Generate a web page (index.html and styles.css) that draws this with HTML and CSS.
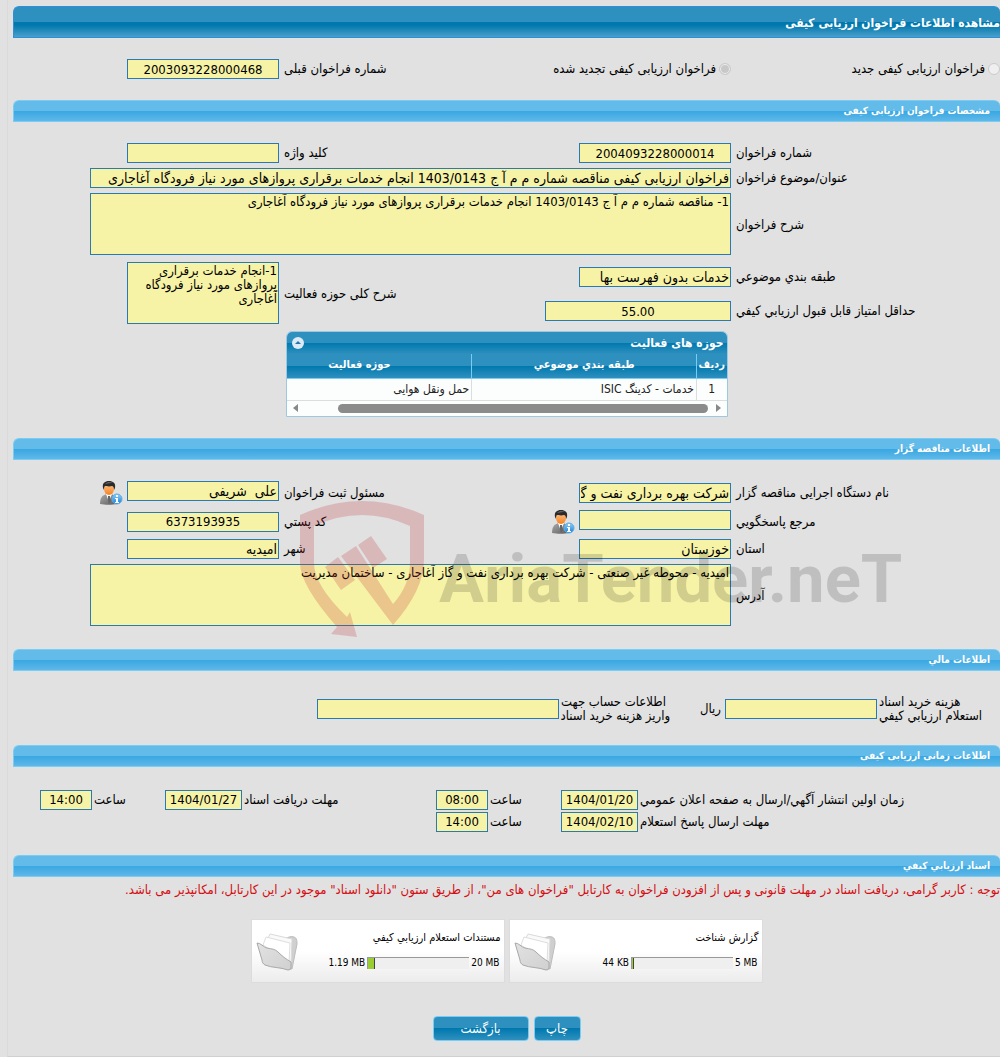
FILE: index.html
```html
<!DOCTYPE html>
<html lang="fa" dir="rtl">
<head>
    <meta charset="UTF-8">
    <meta name="viewport" content="width=device-width, initial-scale=1.0">
    <title>مشاهده اطلاعات فراخوان ارزیابی کیفی</title>
    <link rel="stylesheet" href="styles.css">
</head>
<body>
    <!-- Shared icons -->
    <svg class="sprite" aria-hidden="true">
        <defs>
            <linearGradient id="suit" x1="0" y1="0" x2="1" y2="1">
                <stop offset="0" stop-color="#a9a9a9"/>
                <stop offset="1" stop-color="#5c5c5c"/>
            </linearGradient>
            <linearGradient id="face" x1="0" y1="0" x2="0" y2="1">
                <stop offset="0" stop-color="#ffc58d"/>
                <stop offset="1" stop-color="#f58220"/>
            </linearGradient>
            <linearGradient id="badge" x1="0" y1="0" x2="0" y2="1">
                <stop offset="0" stop-color="#8fd0f8"/>
                <stop offset="1" stop-color="#1b7fd6"/>
            </linearGradient>
            <linearGradient id="front" x1="0" y1="0" x2="1" y2="1">
                <stop offset="0" stop-color="#e2e2e2"/>
                <stop offset="1" stop-color="#d0d0d0"/>
            </linearGradient>
        </defs>
        <symbol id="icon-user" viewBox="0 0 24 24">
            <path d="M1 23c0-6 2-9 7-10h4c4 1 6 4 6 10-5 1-12 1-17 0z" fill="url(#suit)"/>
            <path d="M7 13l3 8 3-8z" fill="#fff"/>
            <path d="M9 15h2l1 5-2 3-1-3z" fill="#666"/>
            <ellipse cx="10" cy="8" rx="5" ry="6" fill="url(#face)"/>
            <path d="M4 7c-1-5 2-7 6-7s7 2 6 7l-1 2c0-3-1-4-2-4-3 1-6 0-7 0-1 1-1 2-1 4z" fill="#2b2b2b"/>
            <path d="M6 3c2-2 5-2 8-1-3 0-5 0-8 1z" fill="#777"/>
            <circle cx="18" cy="18" r="5" fill="url(#badge)" stroke="#5aaee8"/>
            <path d="M17 14h2v2h-2zM16 17h3v4h1v1h-4v-1h1v-3h-1z" fill="#fff"/>
        </symbol>
        <symbol id="icon-folder" viewBox="0 0 44 42">
            <path d="M30 8C33 6 36 5 39 6 42 7 42 10 42 13L37 38 33 37Z" fill="#cfcfcf" stroke="#bdbdbd"/>
            <path d="M10 13L15 3 37 8 36 32Z" fill="#fafafa" stroke="#dadada"/>
            <path d="M8 14L11 6 35 12 34 32Z" fill="#fff" stroke="#dedede"/>
            <path d="M2 12C6 12 8 16 12 17 17 18 20 18 23 21 27 25 31 28 36 31L36 37Q36 39 33 39C25 36 17 37 10 34 8 33 7 31 7 29Z" fill="url(#front)" stroke="#a8a8a8"/>
        </symbol>
    </svg>

    <main class="page">
        <h1 class="title-bar">مشاهده اطلاعات فراخوان ارزیابی کیفی</h1>
        <div class="form-grid">
            <div class="choice">
                <input type="radio" name="type" id="type-new" disabled>
                <label for="type-new">فراخوان ارزیابی کیفی جدید</label>
            </div>
            <div class="choice">
                <input type="radio" name="type" id="type-renewed" checked disabled>
                <label for="type-renewed">فراخوان ارزیابی کیفی تجدید شده</label>
            </div>
            <label class="caption" for="prev-number">شماره فراخوان قبلی</label>
            <div class="cell"><input class="field number" type="text" id="prev-number" value="2003093228000468" readonly></div>
        </div>

        <section>
            <h2 class="section-bar">مشخصات فراخوان ارزیابی کیفی</h2>
            <div class="form-grid">
                <label class="caption" for="number">شماره فراخوان</label>
                <div class="cell"><input class="field number" type="text" id="number" value="2004093228000014" readonly></div>
                <label class="caption" for="keyword">کلید واژه</label>
                <div class="cell"><input class="field" type="text" id="keyword" readonly></div>

                <label class="caption" for="subject">عنوان/موضوع فراخوان</label>
                <div class="cell wide"><input class="field" type="text" id="subject" value="فراخوان ارزیابی کیفی مناقصه شماره م م آ ج 1403/0143 انجام خدمات برقراری پروازهای مورد نیاز فرودگاه آغاجاری" readonly></div>

                <label class="caption" for="description">شرح فراخوان</label>
                <div class="cell wide"><textarea class="field area" id="description" readonly>1- مناقصه شماره م م آ ج 1403/0143 انجام خدمات برقراری پروازهای مورد نیاز فرودگاه آغاجاری</textarea></div>

                <label class="caption" for="category">طبقه بندي موضوعي</label>
                <div class="cell"><input class="field" type="text" id="category" value="خدمات بدون فهرست بها" readonly></div>
                <label class="caption tall" for="activity">شرح کلی حوزه فعالیت</label>
                <div class="cell tall"><textarea class="field area" id="activity" readonly>1-انجام خدمات برقراری پروازهای مورد نیاز فرودگاه آغاجاری</textarea></div>

                <label class="caption" for="score">حداقل امتیاز قابل قبول ارزیابي کیفي</label>
                <div class="cell"><input class="field number score" type="text" id="score" value="55.00" readonly></div>
            </div>

            <div class="data-grid">
                <div class="data-title">
                    <h3>حوزه های فعالیت</h3>
                    <button type="button" class="collapse" aria-label="بستن">
                        <svg viewBox="0 0 12 12" aria-hidden="true"><circle cx="6" cy="6" r="6" fill="#dceaf6"/><path d="M3 7l3-3 3 3z" fill="#1d78ae"/></svg>
                    </button>
                </div>
                <div class="data-view">
                    <table>
                        <thead>
                            <tr><th class="col-row">ردیف</th><th>طبقه بندي موضوعي</th><th>حوزه فعالیت</th></tr>
                        </thead>
                        <tbody>
                            <tr><td class="col-row">1</td><td>خدمات - کدینگ ISIC</td><td>حمل ونقل هوایی</td></tr>
                        </tbody>
                    </table>
                </div>
                <div class="scrollbar" aria-hidden="true">
                    <span class="arrow arrow-right"></span>
                    <span class="track"><span class="thumb"></span></span>
                    <span class="arrow arrow-left"></span>
                </div>
            </div>
        </section>

        <section class="owner">
            <h2 class="section-bar">اطلاعات مناقصه گزار</h2>
            <div class="form-grid">
                <label class="caption" for="agency">نام دستگاه اجرایی مناقصه گزار</label>
                <div class="cell"><input class="field" type="text" id="agency" value="شرکت بهره برداری نفت و گاز" readonly></div>
                <label class="caption" for="registrar">مسئول ثبت فراخوان</label>
                <div class="cell with-icon">
                    <input class="field" type="text" id="registrar" value="علی  شریفی" readonly>
                    <button type="button" class="user-info" aria-label="مسئول ثبت فراخوان"><svg><use href="#icon-user"/></svg></button>
                </div>

                <label class="caption" for="contact">مرجع پاسخگویي</label>
                <div class="cell with-icon">
                    <input class="field" type="text" id="contact" readonly>
                    <button type="button" class="user-info" aria-label="مرجع پاسخگویي"><svg><use href="#icon-user"/></svg></button>
                </div>
                <label class="caption" for="postcode">کد پستي</label>
                <div class="cell"><input class="field number" type="text" id="postcode" value="6373193935" readonly></div>

                <label class="caption" for="province">استان</label>
                <div class="cell"><input class="field" type="text" id="province" value="خوزستان" readonly></div>
                <label class="caption" for="city">شهر</label>
                <div class="cell"><input class="field" type="text" id="city" value="امیدیه" readonly></div>

                <label class="caption" for="address">آدرس</label>
                <div class="cell wide"><textarea class="field area" id="address" readonly>امیدیه - محوطه غیر صنعتی - شرکت بهره برداری نفت و گاز آغاجاری - ساختمان مدیریت</textarea></div>
            </div>
            <div class="watermark" dir="ltr">
                <svg viewBox="0 0 124 138" aria-hidden="true">
                    <path d="M0 15Q62-13 124 15V60Q124 90 93 125L41 56 56 46 93 104Q110 85 110 62V26Q62 4 14 26V63Q14 85 47 117L50 112 57 137 31 134 37 127Q0 85 0 63Z"/>
                    <path d="M25 67L38 57 55 80 41 90ZM58 45L71 36 87 59 73 68Z"/>
                </svg>
                <span>AriaTender.neT</span>
            </div>
        </section>

        <section>
            <h2 class="section-bar">اطلاعات مالي</h2>
            <div class="finance">
                <label for="doc-cost">هزینه خرید اسناد<br>استعلام ارزیابي کیفي</label>
                <input class="field" type="text" id="doc-cost" readonly>
                <span class="unit">ریال</span>
                <label for="account">اطلاعات حساب جهت<br>واریز هزینه خرید اسناد</label>
                <input class="field account" type="text" id="account" readonly>
            </div>
        </section>

        <section>
            <h2 class="section-bar">اطلاعات زمانی ارزیابی کیفی</h2>
            <div class="schedule">
                <label for="publish-date">زمان اولین انتشار آگهي/ارسال به صفحه اعلان عمومي</label>
                <input class="field number" type="text" id="publish-date" value="1404/01/20" readonly>
                <label for="publish-time">ساعت</label>
                <input class="field number" type="text" id="publish-time" value="08:00" readonly>
                <label for="receive-date">مهلت دریافت اسناد</label>
                <input class="field number" type="text" id="receive-date" value="1404/01/27" readonly>
                <label for="receive-time">ساعت</label>
                <input class="field number" type="text" id="receive-time" value="14:00" readonly>

                <label class="row-start" for="reply-date">مهلت ارسال پاسخ استعلام</label>
                <input class="field number" type="text" id="reply-date" value="1404/02/10" readonly>
                <label for="reply-time">ساعت</label>
                <input class="field number" type="text" id="reply-time" value="14:00" readonly>
            </div>
        </section>

        <section>
            <h2 class="section-bar">اسناد ارزیابي کیفي</h2>
            <p class="notice">توجه : کاربر گرامی، دریافت اسناد در مهلت قانونی و پس از افزودن فراخوان به کارتابل "فراخوان های من"، از طریق ستون "دانلود اسناد" موجود در این کارتابل، امکانپذیر می باشد.</p>
            <div class="documents">
                <article class="document">
                    <div class="document-info">
                        <h3>گزارش شناخت</h3>
                        <div class="usage" dir="ltr">
                            <span>44 KB</span>
                            <span class="meter"><span class="meter-fill" style="width: 2%"></span></span>
                            <span>5 MB</span>
                        </div>
                    </div>
                    <svg class="folder" aria-hidden="true"><use href="#icon-folder"/></svg>
                </article>
                <article class="document">
                    <div class="document-info">
                        <h3>مستندات استعلام ارزیابي کیفي</h3>
                        <div class="usage" dir="ltr">
                            <span>1.19 MB</span>
                            <span class="meter"><span class="meter-fill" style="width: 7%"></span></span>
                            <span>20 MB</span>
                        </div>
                    </div>
                    <svg class="folder" aria-hidden="true"><use href="#icon-folder"/></svg>
                </article>
            </div>
        </section>

        <div class="actions">
            <button type="button" class="button">چاپ</button>
            <button type="button" class="button button-wide">بازگشت</button>
        </div>
    </main>
</body>
</html>
```

FILE: styles.css
```css
* {
    box-sizing: border-box;
}

body {
    margin: 0;
    background-color: #e1e1e1;
    color: #000;
    font-family: Tahoma, "DejaVu Sans Condensed", "DejaVu Sans", sans-serif;
    font-size: 13px;
    line-height: 14px;
}

h1, h2, h3, p {
    margin: 0;
}

button, input, textarea {
    font-family: inherit;
}

.sprite {
    position: absolute;
    width: 0;
    height: 0;
}

.page {
    margin-left: 7px;
    padding: 6px 0 15px 5px;
    border-left: 1px solid #dadada;
    border-bottom: 1px solid #d0d0d0;
}

/* Bars */
.title-bar {
    height: 32px;
    border: 1px solid #2f8fd8;
    border-right: 0;
    border-radius: 6px 6px 0 0;
    background: linear-gradient(#2e90bf 0, #2e90bf 50%, #0078ae 50%, #0078ae 60%, #4a9fca 100%);
    color: #fff;
    font-size: 12px;
    line-height: 32px;
}

.section-bar {
    height: 22px;
    padding-right: 10px;
    border: 1px solid #79cdf5;
    border-right: 0;
    border-radius: 6px 6px 0 0;
    background: linear-gradient(#62bbe9 0, #62bbe9 50%, #38a7e2 50%, #5fb8e8 100%);
    color: #fff;
    font-size: 10px;
    line-height: 20px;
}

/* Forms */
.form-grid {
    display: grid;
    grid-template-columns: 269fr 251fr 201fr 266fr;
    row-gap: 5px;
    align-items: center;
    padding: 21px 0;
}

.caption {
    padding-left: 5px;
    text-align: left;
}

.cell {
    display: flex;
    min-width: 0;
}

.wide {
    grid-column: span 3;
    padding-left: 77px;
}

.wide .field {
    width: 100%;
}

.tall {
    grid-row: span 2;
}

.field {
    width: 152px;
    height: 20px;
    margin: 0;
    padding: 1px;
    border: 1px solid #2a7aad;
    border-radius: 0;
    background-color: #f6f3a6;
    color: #000;
    font-size: 14px;
    outline: none;
}

.number {
    font-size: 13px;
    text-align: center;
}

.score {
    width: 186px;
}

.area {
    display: block;
    height: 62px;
    margin-bottom: 2px;
    font-size: 13px;
    line-height: 14px;
    resize: none;
    overflow: hidden;
}

.with-icon {
    align-items: flex-start;
}

.user-info {
    width: 24px;
    height: 24px;
    margin-right: 4px;
    padding: 0;
    border: 0;
    background: none;
    cursor: pointer;
}

.user-info svg {
    display: block;
    width: 24px;
    height: 24px;
}

.choice {
    display: flex;
    align-items: center;
    gap: 3px;
}

.choice input {
    appearance: none;
    width: 12px;
    height: 12px;
    margin: 0;
    border: 1px solid #cbcbcb;
    border-radius: 50%;
    background-color: #efefef;
}

.choice input:checked {
    background-color: #c8c8c8;
    box-shadow: inset 0 0 0 1px #efefef;
}

/* Activity table */
.data-grid {
    width: 442px;
    max-width: 100%;
    margin: -16px auto 21px;
    border: 1px solid #9dc8e0;
    border-radius: 6px 6px 0 0;
    background-color: #fcfdfd;
    overflow: hidden;
}

.data-title {
    display: flex;
    justify-content: space-between;
    align-items: center;
    height: 22px;
    padding: 0 3px 0 5px;
    background: linear-gradient(#2e90bf 50%, #0078ae 50%, #2e90bf 100%);
    color: #fff;
}

.data-title h3 {
    font-size: 12px;
}

.collapse {
    width: 12px;
    height: 12px;
    padding: 0;
    border: 0;
    background: none;
    cursor: pointer;
}

.collapse svg {
    display: block;
}

.data-view {
    overflow: hidden;
}

.data-view table {
    width: 480px;
    border-collapse: collapse;
    table-layout: fixed;
    font-size: 12px;
}

.data-view thead {
    background: linear-gradient(#2e90bf 50%, #0078ae 50%, #2e90bf 100%);
    color: #fff;
}

.data-view th {
    height: 24px;
    padding: 0 0 2px;
    border-left: 1px solid #79cdf5;
    border-bottom: 1px solid #79cdf5;
    font-size: 11px;
}

.data-view td {
    height: 22px;
    padding: 0 2px;
    border-left: 1px solid #ddd;
    border-bottom: 1px solid #ddd;
    color: #222;
}

.data-view .col-row {
    width: 30px;
    text-align: center;
}

.scrollbar {
    display: flex;
    align-items: center;
    height: 15px;
    padding: 0 6px;
}

.arrow {
    border: 4px solid transparent;
    border-width: 4px 0;
}

.arrow-right {
    border-left: 5px solid #888;
}

.arrow-left {
    border-right: 5px solid #888;
}

.track {
    flex: 1;
    padding: 0 8px;
}

.thumb {
    display: block;
    width: 92%;
    height: 9px;
    border-radius: 5px;
    background-color: #8b8b8b;
}

/* Watermark lies over the owner fields */
.owner {
    position: relative;
}

.watermark {
    position: absolute;
    top: 62px;
    left: 287px;
    display: flex;
    align-items: flex-start;
    gap: 15px;
    color: rgba(0, 0, 0, 0.15);
    font-family: Roboto, "Liberation Sans", sans-serif;
    font-size: 67px;
    font-weight: bold;
    line-height: 158px;
    white-space: nowrap;
    pointer-events: none;
}

.watermark svg {
    width: 124px;
    height: 138px;
    fill: rgba(190, 40, 50, 0.22);
}

/* Finance */
.finance {
    display: flex;
    align-items: center;
    gap: 2px;
    padding: 24px 12px 22px 0;
}

.finance label {
    width: 109px;
    text-align: left;
    white-space: nowrap;
}

.finance .account {
    width: 242px;
}

.unit {
    margin: 0 2px 0 28px;
}

/* Schedule */
.schedule {
    display: grid;
    grid-template-columns: 362fr 77px 73px 52px 194fr 77px 73px 52px 27fr;
    row-gap: 2px;
    align-items: center;
    padding: 23px 0;
}

.schedule label {
    padding-left: 2px;
    text-align: left;
}

.schedule .field {
    width: 100%;
}

.row-start {
    grid-column-start: 1;
}

/* Documents */
.notice {
    padding: 6px 0 22px;
    color: #d40d12;
    white-space: nowrap;
}

.documents {
    display: flex;
    justify-content: center;
    gap: 4px;
}

.document {
    display: flex;
    justify-content: space-between;
    width: 254px;
    height: 64px;
    padding: 11px 3px 0;
    border: 1px solid #dcdcdc;
    background: linear-gradient(#fff 50%, #ececec);
}

.document-info {
    display: flex;
    flex-direction: column;
    gap: 12px;
}

.document h3 {
    font-size: 11px;
    font-weight: normal;
}

.usage {
    display: flex;
    justify-content: flex-end;
    align-items: center;
    gap: 2px;
    padding-right: 1px;
    font-size: 10px;
    line-height: 12px;
}

.meter {
    width: 102px;
    height: 12px;
    border-top: 1px solid #999;
    border-left: 1px solid #999;
    background-color: #efefef;
}

.meter-fill {
    display: block;
    height: 100%;
    border-right: 1px solid #444;
    background-color: #9acd32;
}

.folder {
    width: 44px;
    height: 42px;
}

/* Actions */
.actions {
    display: flex;
    justify-content: center;
    gap: 5px;
    padding-top: 33px;
}

.button {
    min-width: 47px;
    height: 25px;
    padding: 0 10px;
    border: 1px solid #79cdf5;
    border-radius: 4px;
    background: linear-gradient(#2e90bf 50%, #0078ae 50%, #2e90bf 100%);
    color: #fff;
    font-size: 13px;
    cursor: pointer;
}

.button-wide {
    min-width: 96px;
}
```
